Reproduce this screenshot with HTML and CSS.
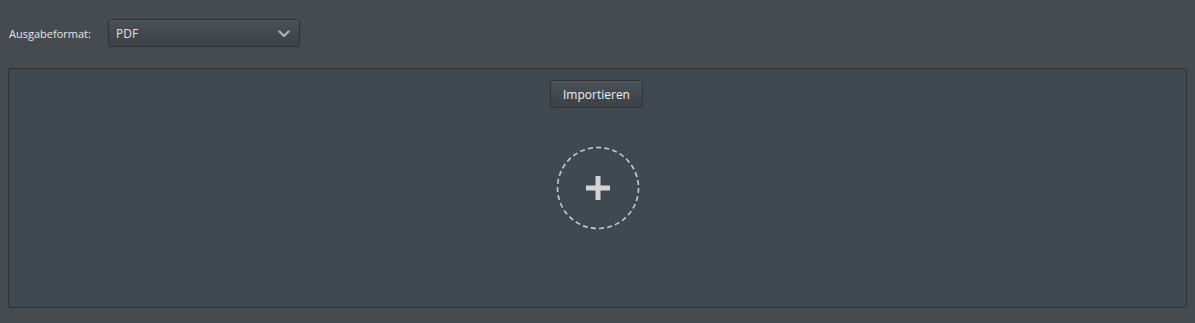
FILE: index.html
```html
<!DOCTYPE html>
<html lang="de">
<head>
<meta charset="utf-8">
<link rel="stylesheet" href="styles.css">
</head>
<body>
<div class="toolbar">
  <label class="label">Ausgabeformat:</label>
  <div class="select">
    <span class="select-value">PDF</span>
    <svg class="chevron" width="12" height="8" viewBox="0 0 12 8"><path d="M1.5 1.5 L6 6 L10.5 1.5" fill="none" stroke="#a9afb3" stroke-width="2.4" stroke-linecap="round" stroke-linejoin="round"/></svg>
  </div>
</div>
<div class="panel">
  <button class="btn">Importieren</button>
  <div class="drop">
    <svg width="84" height="84" viewBox="0 0 84 84">
      <circle cx="42" cy="42" r="40.5" fill="none" stroke="#c9cbcd" stroke-width="1.6" stroke-dasharray="5 3.2"/>
      <rect x="30" y="39.5" width="24" height="5" fill="#d2d4d6"/>
      <rect x="39.5" y="30" width="5" height="24" fill="#d2d4d6"/>
    </svg>
  </div>
</div>
</body>
</html>
```
FILE: styles.css
```css
html, body {
  margin: 0;
  padding: 0;
}
body {
  width: 1195px;
  height: 323px;
  background: #454b4e;
  font-family: "Open Sans", "Noto Sans", sans-serif;
  color: #e6e8ea;
  overflow: hidden;
}
.toolbar {
  display: flex;
  align-items: center;
  padding: 19px 0 0 9px;
  height: 28px;
}
.label {
  font-size: 11px;
  color: #e4e6e8;
  width: 99px;
  flex: none;
}
.select {
  box-sizing: border-box;
  width: 192px;
  height: 28px;
  display: flex;
  align-items: center;
  justify-content: space-between;
  padding: 0 8px 0 7px;
  border: 1px solid #2e3337;
  border-radius: 3px;
  background: linear-gradient(#4a5157, #3b4146);
  box-shadow: inset 0 1px 0 rgba(255,255,255,0.06);
}
.select-value {
  font-size: 12px;
  color: #dfe2e5;
}
.chevron {
  margin-right: 1px;
  margin-top: 1px;
}
.panel {
  box-sizing: border-box;
  margin: 21px 0 0 8px;
  width: 1179px;
  height: 240px;
  border: 1px solid #2d3236;
  border-radius: 2px;
  background: #414950;
  display: flex;
  flex-direction: column;
  align-items: center;
  padding-top: 11px;
}
.btn {
  box-sizing: border-box;
  width: 93px;
  height: 28px;
  margin-right: 2px;
  border: 1px solid #2e3337;
  border-radius: 3px;
  background: linear-gradient(#4a5157, #3b4146);
  color: #eceef0;
  font-family: "Open Sans", "Noto Sans", sans-serif;
  font-size: 12px;
  padding: 0;
  box-shadow: inset 0 1px 0 rgba(255,255,255,0.06);
}
.drop {
  margin-top: 38px;
  width: 84px;
  height: 84px;
  margin-left: 1px;
}
.drop svg {
  display: block;
}
```
